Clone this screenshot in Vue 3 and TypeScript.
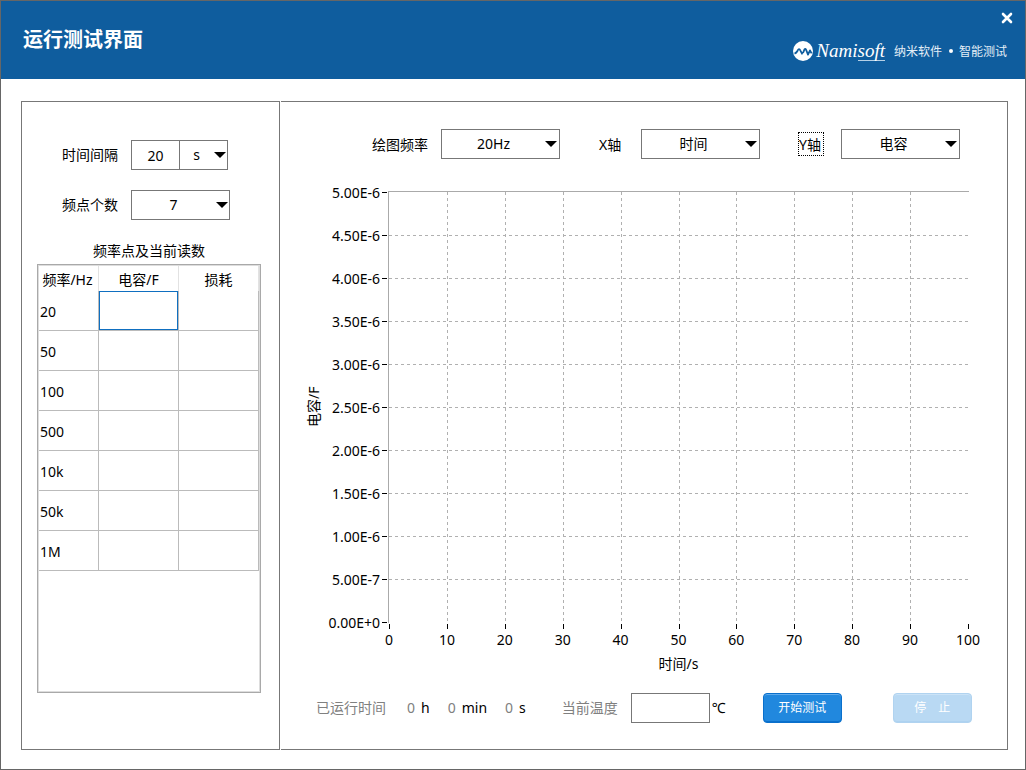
<script setup lang="ts">
import { ref } from 'vue'

const interval = ref('20')
const unit = ref('s')
const pointCount = ref('7')
const plotFrequency = ref('20Hz')
const xAxis = ref('时间')
const yAxis = ref('电容')
const temperature = ref('')

const frequencies: string[] = ['20', '50', '100', '500', '10k', '50k', '1M']

const yLabels: string[] = [
  '5.00E-6', '4.50E-6', '4.00E-6', '3.50E-6', '3.00E-6', '2.50E-6',
  '2.00E-6', '1.50E-6', '1.00E-6', '5.00E-7', '0.00E+0',
]
const xLabels: number[] = Array.from({ length: 11 }, (_, i) => i * 10)

const elapsed: { value: number; unit: string }[] = [
  { value: 0, unit: 'h' },
  { value: 0, unit: 'min' },
  { value: 0, unit: 's' },
]

const gridX = (i: number): number => Math.round(57.9 * i) + 0.5
const gridY = (i: number): number => 43 * i + 0.5
</script>

<template>
  <div class="window">
    <header class="header">
      <h1>运行测试界面</h1>
      <div class="header-side">
        <button class="close" type="button" aria-label="关闭">
          <svg width="12" height="12" viewBox="0 0 12 12" aria-hidden="true">
            <path d="M2 2L10 10M10 2L2 10" stroke="#fff" stroke-width="2.6" stroke-linecap="round" />
          </svg>
        </button>
        <div class="brand">
          <svg width="20" height="20" viewBox="0 0 20 20" aria-hidden="true">
            <circle cx="10" cy="10" r="10" fill="#fff" />
            <path
              d="M1.5 12.6Q3.4 12 4.4 10Q6 6.6 7.4 9.6L9.4 13.4M10 12L11.4 8.6Q12.4 7 13.2 9L15 13.6L17 9.4L18.6 12.4"
              fill="none" stroke="#0f5d9e" stroke-width="1.8" stroke-linejoin="round"
            />
          </svg>
          <span class="brand-name">Nami<span class="underlined">soft</span></span>
          <span class="slogan">纳米软件</span>
          <i class="dot"></i>
          <span class="motto">智能测试</span>
        </div>
      </div>
    </header>

    <main class="body">
      <section class="settings">
        <div class="field">
          <label for="interval">时间间隔</label>
          <div class="joined">
            <input id="interval" v-model="interval" class="box interval" type="text" />
            <div class="pick unit">
              <select v-model="unit" class="box" aria-label="时间单位">
                <option>s</option>
                <option>min</option>
              </select>
              <svg width="12" height="6" viewBox="0 0 12 6" aria-hidden="true"><path d="M0 0H12L6 6Z" /></svg>
            </div>
          </div>
        </div>
        <div class="field">
          <label for="points">频点个数</label>
          <div class="pick points">
            <select id="points" v-model="pointCount" class="box">
              <option>7</option>
              <option>6</option>
            </select>
            <svg width="12" height="6" viewBox="0 0 12 6" aria-hidden="true"><path d="M0 0H12L6 6Z" /></svg>
          </div>
        </div>

        <h2 id="readings">频率点及当前读数</h2>
        <div class="table-frame">
          <table aria-labelledby="readings">
            <thead>
              <tr>
                <th class="first">频率/Hz</th>
                <th>电容/F</th>
                <th>损耗</th>
              </tr>
            </thead>
            <tbody>
              <tr v-for="(f, i) in frequencies" :key="f">
                <td>{{ f }}</td>
                <td :class="{ active: i === 0 }"></td>
                <td></td>
              </tr>
            </tbody>
          </table>
        </div>
      </section>

      <section class="plot-panel">
        <div class="toolbar">
          <div class="tool">
            <label for="freq" class="wide-label">绘图频率</label>
            <div class="pick">
              <select id="freq" v-model="plotFrequency" class="box">
                <option>20Hz</option>
                <option>50Hz</option>
              </select>
              <svg width="12" height="6" viewBox="0 0 12 6" aria-hidden="true"><path d="M0 0H12L6 6Z" /></svg>
            </div>
          </div>
          <div class="tool">
            <label for="xaxis" class="axis-label">X轴</label>
            <div class="pick">
              <select id="xaxis" v-model="xAxis" class="box">
                <option>时间</option>
                <option>频率</option>
              </select>
              <svg width="12" height="6" viewBox="0 0 12 6" aria-hidden="true"><path d="M0 0H12L6 6Z" /></svg>
            </div>
          </div>
          <div class="tool">
            <label for="yaxis" class="axis-label focused">Y轴</label>
            <div class="pick">
              <select id="yaxis" v-model="yAxis" class="box">
                <option>电容</option>
                <option>损耗</option>
              </select>
              <svg width="12" height="6" viewBox="0 0 12 6" aria-hidden="true"><path d="M0 0H12L6 6Z" /></svg>
            </div>
          </div>
        </div>

        <div class="chart">
          <div class="y-title">电容/F</div>
          <div class="y-labels">
            <span v-for="l in yLabels" :key="l">{{ l }}</span>
          </div>
          <div class="plot">
            <svg viewBox="0 0 580 431" preserveAspectRatio="none" aria-hidden="true">
              <g class="grid">
                <line v-for="i in 9" :key="'v' + i" :x1="gridX(i)" :x2="gridX(i)" y1="0" y2="431" />
                <line v-for="i in 9" :key="'h' + i" :y1="gridY(i)" :y2="gridY(i)" x1="0" x2="580" />
              </g>
              <g class="ticks">
                <line v-for="i in 11" :key="'tx' + i" :x1="gridX(i - 1)" :x2="gridX(i - 1)" y1="432" y2="437" />
                <line v-for="i in 11" :key="'ty' + i" :y1="gridY(i - 1)" :y2="gridY(i - 1)" x1="-7" x2="-2" />
              </g>
            </svg>
          </div>
          <div class="x-labels">
            <span v-for="l in xLabels" :key="l">{{ l }}</span>
          </div>
          <div class="x-title">时间/s</div>
        </div>

        <div class="status">
          <span class="muted">已运行时间</span>
          <div class="elapsed">
            <span v-for="e in elapsed" :key="e.unit" class="part">
              <span class="muted">{{ e.value }}</span>{{ e.unit }}
            </span>
          </div>
          <label for="temp" class="muted temp-label">当前温度</label>
          <input id="temp" v-model="temperature" class="box temp" type="text" />
          <span class="degree">℃</span>
          <button type="button" class="action">开始测试</button>
          <button type="button" class="action stop" disabled>停　止</button>
        </div>
      </section>
    </main>
  </div>
</template>

<style>
body {
  margin: 0;
  background: #fff;
}
</style>

<style scoped>
.window {
  box-sizing: border-box;
  min-height: 100vh;
  display: flex;
  flex-direction: column;
  border: 1px solid #666;
  background: #fff;
  color: #000;
  font: 14px/20px "Noto Sans", "Noto Sans CJK SC", sans-serif;
}
.window * {
  box-sizing: border-box;
}
.header {
  height: 78px;
  display: flex;
  justify-content: space-between;
  padding: 0 12px 0 22px;
  background: #0f5d9e;
  color: #fff;
}
h1 {
  margin: 0;
  font: bold 20px/76px "Noto Sans CJK SC", sans-serif;
}
.header-side {
  display: flex;
  flex-direction: column;
  align-items: flex-end;
  padding-top: 11px;
}
.close {
  display: block;
  padding: 0;
  border: 0;
  background: none;
  height: 12px;
  line-height: 0;
}
.brand {
  display: flex;
  align-items: center;
  height: 24px;
  margin: 15px 6px 0 0;
  font-size: 12px;
}
.brand-name {
  margin-left: 3px;
  font: italic 19px/20px "Liberation Serif", serif;
}
.underlined {
  display: inline-block;
  height: 20px;
  border-bottom: 1px solid #b5d0e6;
}
.slogan {
  margin-left: 9px;
}
.slogan,
.motto {
  padding-top: 2px;
  color: #e3eef7;
}
.dot {
  width: 4px;
  height: 4px;
  margin: 0 6px 0 7px;
  border-radius: 50%;
  background: #fff;
}
.body {
  flex: 1;
  display: flex;
  gap: 1px;
  padding: 22px 17px 19px 20px;
}
.settings {
  flex: none;
  width: 259px;
  display: flex;
  flex-direction: column;
  padding: 38px 18px 56px 15px;
  border: 1px solid #777;
}
.field {
  display: flex;
  align-items: center;
  gap: 13px;
  margin: 0 0 20px 25px;
}
.joined {
  display: flex;
}
.box {
  width: 100%;
  height: 30px;
  margin: 0;
  padding: 0;
  border: 1px solid #777;
  border-radius: 0;
  outline: 0;
  background: #fff;
  color: #000;
  font: inherit;
  text-align: center;
}
select.box {
  appearance: none;
  padding-right: 14px;
  text-align-last: center;
}
.box.interval {
  width: 49px;
}
.pick {
  display: grid;
  align-items: center;
  flex: 0 1 119px;
  width: 119px;
}
.pick > * {
  grid-area: 1 / 1;
}
.pick svg {
  justify-self: end;
  margin-right: 3px;
  pointer-events: none;
}
.pick.unit {
  width: 49px;
  flex: none;
  margin-left: -1px;
}
.pick.unit svg,
.pick.points svg {
  margin-right: 2px;
}
.pick.points {
  width: 99px;
  flex: none;
}
h2 {
  margin: 1px 0 3px;
  font: inherit;
  text-align: center;
}
.table-frame {
  flex: 1;
  border: 1px solid #a9a9a9;
  box-shadow: inset 0 0 0 1px #ddd;
  padding: 1px;
}
table {
  width: 100%;
  border-collapse: separate;
  border-spacing: 0;
  table-layout: fixed;
}
th {
  height: 25px;
  padding: 2px 0 0;
  border-right: 1px solid #e2e2e2;
  font-weight: normal;
}
th.first {
  width: 60px;
  padding-right: 2px;
}
td {
  height: 40px;
  padding: 2px 1px 0;
  border-right: 1px solid #bbb;
  border-bottom: 1px solid #bbb;
}
td.active {
  box-shadow: inset 0 0 0 1px #0f6fc0;
}
.plot-panel {
  flex: 1;
  min-width: 0;
  display: flex;
  flex-direction: column;
  padding: 27px 35px 26px 23px;
  border: 1px solid #777;
  border-left: 0;
}
.toolbar {
  display: flex;
  gap: 39px;
  padding-left: 68px;
  margin-bottom: 32px;
}
.tool {
  display: flex;
  align-items: center;
}
.tool label {
  padding-top: 2px;
}
.wide-label {
  margin-right: 13px;
}
.axis-label {
  width: 24px;
  margin-right: 18px;
}
.focused {
  outline: 1px dotted #000;
}
.chart {
  flex: 1;
  display: grid;
  grid-template-columns: 20px 64px 1fr;
  grid-template-rows: 1fr 33px 16px;
  margin-right: 3px;
}
.y-title {
  writing-mode: vertical-rl;
  text-orientation: sideways;
  transform: rotate(180deg);
  text-align: center;
}
.y-labels {
  display: flex;
  flex-direction: column;
  justify-content: space-between;
  align-items: flex-end;
  padding: 2px 8px 0 0;
}
.y-labels span {
  height: 0;
  line-height: 0;
}
.plot {
  display: grid;
  min-height: 432px;
  border-top: 1px solid #aaa;
  border-left: 1px solid #aaa;
}
.plot svg {
  width: 100%;
  height: 100%;
  overflow: visible;
}
.grid line {
  stroke: #b0b0b0;
  stroke-dasharray: 3 3;
}
.ticks line {
  stroke: #000;
}
.x-labels {
  grid-column: 3;
  display: flex;
  justify-content: space-between;
  padding: 0 1px;
  line-height: 34px;
}
.x-labels span {
  width: 0;
  display: flex;
  justify-content: center;
}
.x-title {
  grid-column: 3;
  line-height: 16px;
  text-align: center;
}
.status {
  display: flex;
  align-items: center;
  height: 30px;
  margin-top: 21px;
  padding-left: 12px;
  white-space: nowrap;
}
.muted {
  color: #808080;
}
.elapsed {
  display: flex;
  gap: 18px;
  margin-left: 21px;
}
.part {
  display: flex;
  gap: 6px;
}
.temp-label {
  margin-left: 36px;
}
.box.temp {
  width: 79px;
  margin-left: 13px;
}
.degree {
  width: 53px;
  padding-left: 2px;
}
.action {
  flex: none;
  width: 79px;
  height: 30px;
  padding: 0;
  border: 1px solid #0a70cc;
  border-radius: 4px;
  background: #2188de;
  box-shadow: inset 0 1px 0 #5fabec, inset 0 -1px 0 #0a70cc;
  color: #fff;
  font: inherit;
  font-size: 12px;
}
.stop {
  margin-left: 51px;
  border-color: #b0d3f0;
  background: #b9d9f3;
  box-shadow: inset 0 1px 0 #cbe3f7, inset 0 -1px 0 #aed2f0;
}
</style>
